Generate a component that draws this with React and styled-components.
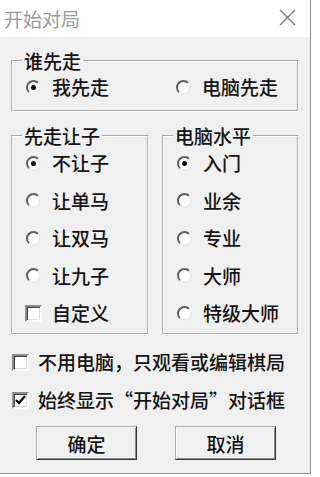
import React, { useState } from 'react';
import styled, { createGlobalStyle } from 'styled-components';

const GlobalStyle = createGlobalStyle`
  html, body {
    margin: 0;
    padding: 0;
    background: #fff;
  }
  body {
    font-family: "Noto Sans CJK SC", "Noto Sans", sans-serif;
  }
`;

const Window = styled.div`
  width: 310px;
  background: #f0f0f0;
  border-right: 1px solid #8f8f8f;
  border-bottom: 1px solid #8f8f8f;
`;

const TitleBar = styled.div`
  height: 37px;
  box-sizing: border-box;
  display: flex;
  align-items: center;
  justify-content: space-between;
  padding: 0 14px 0 4px;
  background: #fff;
`;

const Title = styled.span`
  font-size: 19px;
  line-height: 22px;
  color: #9a9a9a;
`;

const CloseIcon = styled.svg`
  width: 17px;
  height: 17px;
  margin-top: -2px;
`;

const Body = styled.div`
  display: flex;
  flex-direction: column;
  padding: 13px 11px 13px;
`;

const GroupBox = styled.fieldset`
  margin: 0;
  min-width: 0;
  padding: ${p => p.$pad};
  border: 2px groove #fff;
`;

const Legend = styled.legend`
  margin-left: -2px;
  padding: 0 2px;
  font-size: 19px;
  font-weight: 500;
  line-height: 22px;
  color: #141414;
`;

const TwoCols = styled.div`
  display: grid;
  grid-template-columns: 150px auto;
`;

const GroupRow = styled.div`
  display: grid;
  grid-template-columns: 138px 137px;
  gap: 13px;
  margin-top: 13px;
`;

const OptionList = styled.div`
  display: flex;
  flex-direction: column;
  gap: ${p => p.$gap || 0}px;
  margin-top: ${p => p.$top || 0}px;
`;

const Option = styled.label`
  display: flex;
  align-items: center;
  gap: ${p => p.$gap}px;
  height: ${p => p.$h}px;
  font-size: 19px;
  font-weight: 500;
  line-height: 22px;
  color: #141414;
  white-space: nowrap;
  cursor: default;
`;

const Slot = styled.span`
  flex: none;
  width: 18px;
  display: flex;
  justify-content: center;
  align-items: center;
`;

const RadioMark = styled.span`
  position: relative;
  width: 15px;
  height: 15px;
  box-sizing: border-box;
  border-radius: 50%;
  border: 2px solid;
  border-color: #5e5e5e #ececec #ececec #5e5e5e;
  background: #fff;

  &::after {
    content: '';
    display: ${p => (p.$on ? 'block' : 'none')};
    position: absolute;
    top: 3px;
    left: 3px;
    width: 5px;
    height: 5px;
    border-radius: 50%;
    background: #0c0c0c;
  }
`;

const CheckMark = styled.span`
  width: 17px;
  height: 17px;
  box-sizing: border-box;
  display: flex;
  align-items: center;
  justify-content: center;
  border: 2px solid;
  border-color: #8c8c8c #fafafa #fafafa #8c8c8c;
  box-shadow: inset 1px 1px 0 #3f3f3f, inset -1px -1px 0 #dedede;
  background: #fff;
`;

const Buttons = styled.div`
  display: flex;
  gap: 38px;
  margin-top: 14px;
  padding-left: 25px;
`;

const Button = styled.button`
  width: 101px;
  height: 34px;
  box-sizing: border-box;
  padding: 0;
  font-family: inherit;
  font-size: 19px;
  font-weight: 500;
  line-height: 1;
  color: #141414;
  background: #f0f0f0;
  border: 1px solid;
  border-color: #adadad #333 #333 #adadad;
  box-shadow: inset 1px 1px 0 #fff, inset -1px -1px 0 #8c8c8c;
`;

const Radio = ({ on, children, onPick }) => (
  <Option $gap={10} $h={22} onClick={onPick}>
    <Slot>
      <RadioMark $on={on} />
    </Slot>
    {children}
  </Option>
);

const Check = ({ on, children, onToggle, gap = 10, h = 22 }) => (
  <Option $gap={gap} $h={h} onClick={onToggle}>
    <Slot>
      <CheckMark>
        {on && (
          <svg width="11" height="10" viewBox="0 0 11 10">
            <path d="M1 5 L4 8 L10 1" fill="none" stroke="#111" strokeWidth="2.4" />
          </svg>
        )}
      </CheckMark>
    </Slot>
    {children}
  </Option>
);

const handicaps = ['不让子', '让单马', '让双马', '让九子'];
const levels = ['入门', '业余', '专业', '大师', '特级大师'];

export default function App() {
  const [first, setFirst] = useState('me');
  const [handicap, setHandicap] = useState(0);
  const [level, setLevel] = useState(0);
  const [custom, setCustom] = useState(false);
  const [noComputer, setNoComputer] = useState(false);
  const [alwaysShow, setAlwaysShow] = useState(true);

  return (
    <>
      <GlobalStyle />
      <Window lang="zh-CN">
        <TitleBar>
          <Title>开始对局</Title>
          <CloseIcon viewBox="0 0 17 17">
            <path d="M1 1 L16 16 M16 1 L1 16" stroke="#777" strokeWidth="1.3" fill="none" />
          </CloseIcon>
        </TitleBar>

        <Body>
          <GroupBox $pad="4px 11px 12px">
            <Legend>谁先走</Legend>
            <TwoCols>
              <Radio on={first === 'me'} onPick={() => setFirst('me')}>我先走</Radio>
              <Radio on={first === 'pc'} onPick={() => setFirst('pc')}>电脑先走</Radio>
            </TwoCols>
          </GroupBox>

          <GroupRow>
            <GroupBox $pad="5px 11px 9px">
              <Legend>先走让子</Legend>
              <OptionList $gap={15.5}>
                {handicaps.map((h, i) => (
                  <Radio key={h} on={handicap === i} onPick={() => setHandicap(i)}>{h}</Radio>
                ))}
                <Check on={custom} onToggle={() => setCustom(!custom)}>自定义</Check>
              </OptionList>
            </GroupBox>

            <GroupBox $pad="5px 11px 9px">
              <Legend>电脑水平</Legend>
              <OptionList $gap={15.5}>
                {levels.map((l, i) => (
                  <Radio key={l} on={level === i} onPick={() => setLevel(i)}>{l}</Radio>
                ))}
              </OptionList>
            </GroupBox>
          </GroupRow>

          <OptionList $gap={14} $top={15}>
            <Check gap={9} h={24} on={noComputer} onToggle={() => setNoComputer(!noComputer)}>
              不用电脑，只观看或编辑棋局
            </Check>
            <Check gap={9} h={24} on={alwaysShow} onToggle={() => setAlwaysShow(!alwaysShow)}>
              始终显示“开始对局”对话框
            </Check>
          </OptionList>

          <Buttons>
            <Button>确定</Button>
            <Button>取消</Button>
          </Buttons>
        </Body>
      </Window>
    </>
  );
}
